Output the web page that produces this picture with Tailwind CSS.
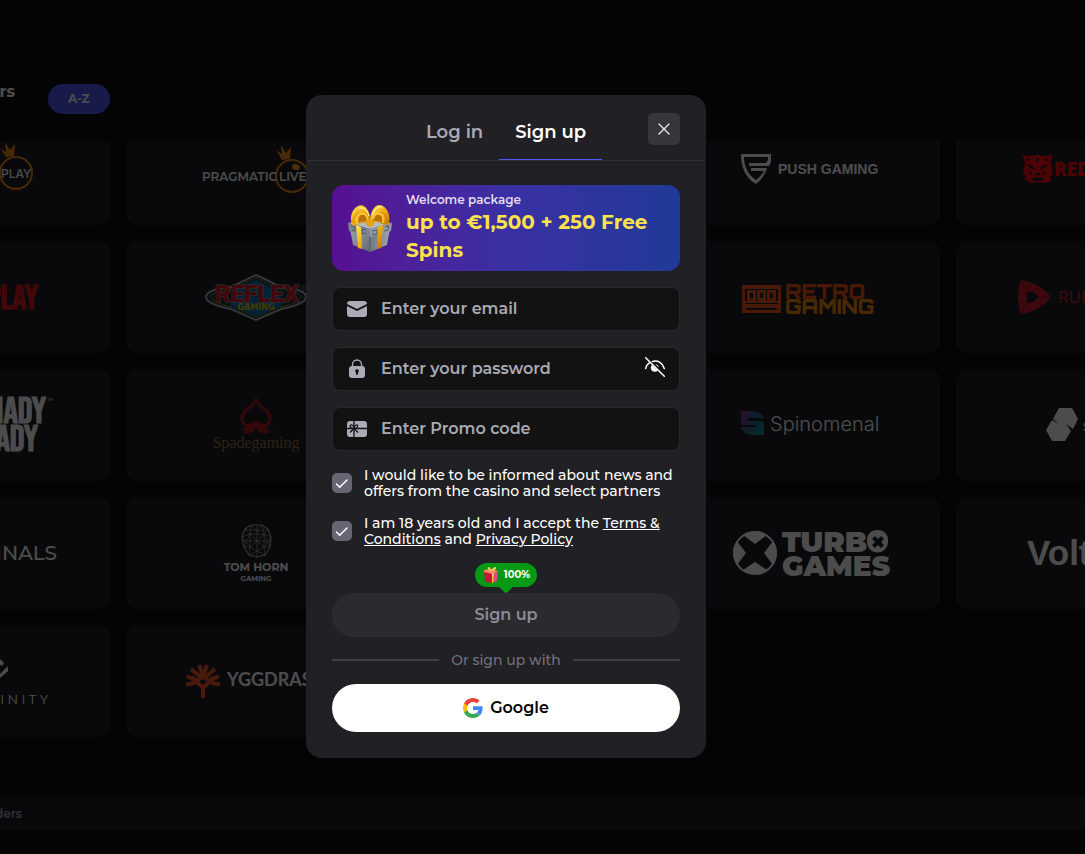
<!DOCTYPE html>
<html lang="en">
<head>
  <meta charset="UTF-8">
  <meta name="viewport" content="width=device-width, initial-scale=1">
  <title>Sign up</title>
  <script src="https://cdn.jsdelivr.net/npm/@tailwindcss/browser@4"></script>
</head>

<body class="bg-[#101011] min-h-screen overflow-hidden font-['Montserrat','Inter',sans-serif] text-white">

<!-- Providers page -->
<main class="overflow-hidden">
  <header class="flex items-start h-[141px] pt-[84px]">
    <h1 class="flex justify-end w-12 pr-[33px] text-base leading-4 font-bold">Providers</h1>
    <button class="h-[30px] px-5 rounded-full bg-[#5058f8] text-xs font-bold">A-Z</button>
  </header>

  <section class="overflow-hidden">
    <div class="grid grid-cols-5 gap-4 -mt-7 -ml-[151px] -mr-[132px]">

      <!-- row 1 -->
      <a href="#" aria-label="Pragmatic Play" class="flex justify-center h-28 rounded-xl bg-[#202127]">
        <svg width="260" height="112" viewBox="0 0 260 112">
          <path d="M157 44l-6-9 6 4-1-10 5 8 5-6-1 12z" fill="#f0861a"/>
          <circle cx="167" cy="60" r="16" fill="none" stroke="#f0861a" stroke-width="2"/>
          <text x="152" y="65" font-size="12" font-weight="500" font-family="Inter" fill="#fff">PLAY</text>
        </svg>
      </a>
      <a href="#" aria-label="Pragmatic Live" class="flex justify-center h-28 rounded-xl bg-[#202127]">
        <svg width="260" height="112" viewBox="0 0 260 112">
          <path d="M156 47l-6-10 6 4-1-9 5 8 5-6-1 12z" fill="#f0861a"/>
          <circle cx="166" cy="63" r="16" fill="none" stroke="#f0861a" stroke-width="2"/>
          <ellipse cx="170" cy="54" rx="4" ry="3" fill="#f0a01a" transform="rotate(20 170 54)"/>
          <text x="76" y="68" font-size="12" font-weight="600" fill="#fff">PRAGMATIC</text>
          <text x="153" y="68" font-size="12" font-weight="600" fill="#fff">LIVE</text>
        </svg>
      </a>
      <div class="h-28 rounded-xl bg-[#202127]"></div>
      <a href="#" aria-label="Push Gaming" class="flex justify-center h-28 rounded-xl bg-[#202127]">
        <svg width="260" height="112" viewBox="0 0 260 112" fill="#fff">
          <path fill-rule="evenodd" d="M61 41h30v8l-2 4H69v-3h17l2-3v-3H64c0 9 4 18 12 23 4-3 6-6 8-9H71v-3h16c-2 7-6 12-11 16C65 65 61 53 61 41z"/>
          <text x="98" y="61" font-size="14" font-weight="700" font-family="Liberation Sans">PUSH GAMING</text>
        </svg>
      </a>
      <a href="#" aria-label="Red Tiger" class="flex justify-center h-28 rounded-xl bg-[#202127]">
        <svg width="260" height="112" viewBox="0 0 260 112" fill="#ff0a12">
          <path fill-rule="evenodd" d="M65 42l8 1 7-1 8 1 7-1-1 7 2 13-3 2 1 4-6 2-7-1-7 1-6-3 1-4-3-2 2-11zM70 45l-1 4 4-3zM90 45l2 4-5-3zM70 51l6 2 2 4-6-3zM91 51l-6 2-2 4 6-3zM77 60h7l-3 3zM74 58l1 5-3-3zM87 58l-1 5 3-3zM75 65l5-1 1 2 1-2 5 1-2 3h-8zM79 45l1 6 2-6z"/>
          <text x="97" y="63" font-size="19" font-weight="800" font-family="Open Sans">RED TIGER</text>
        </svg>
      </a>

      <!-- row 2 -->
      <a href="#" aria-label="Play" class="flex justify-center h-28 rounded-xl bg-[#202127]">
        <svg width="260" height="112" viewBox="0 0 260 112">
          <text x="189" y="68" text-anchor="end" font-size="34" font-weight="700" font-family="Bebas Neue, Oswald, Roboto Condensed, Lato, sans-serif" fill="#e01a20">PLAY</text>
        </svg>
      </a>
      <a href="#" aria-label="Reflex Gaming" class="flex justify-center h-28 rounded-xl bg-[#202127]">
        <svg width="260" height="112" viewBox="0 0 260 112">
          <path d="M130 34l25 12c20 2 25 6 25 10s-5 8-25 12l-25 11-25-11c-20-4-25-8-25-12s5-8 25-10z" fill="#103040" stroke="#a8b8b8" stroke-width="2"/>
          <path d="M130 37l23 11c16 2 22 5 22 8s-6 7-22 10l-23 10-23-10c-16-3-22-7-22-10s6-6 22-8z" fill="none" stroke="#d0b000" stroke-dasharray="2 1"/>
          <path d="M130 39l25 12v14l-25 10-25-10V51z" fill="#0074b8"/>
          <text x="131" y="61" text-anchor="middle" font-size="24" font-weight="900" font-family="Roboto" fill="#d81c2c" stroke="#a0a8a8" stroke-width="1" paint-order="stroke">REFLEX</text>
          <text x="130" y="69" text-anchor="middle" font-size="8" font-weight="700" font-family="DejaVu Sans" fill="#e0cc00">GAMING</text>
          <text x="174" y="50" font-size="8" fill="#999">®</text>
        </svg>
      </a>
      <div class="h-28 rounded-xl bg-[#202127]"></div>
      <a href="#" aria-label="Retro Gaming" class="flex justify-center h-28 rounded-xl bg-[#202127]">
        <svg width="260" height="112" viewBox="0 0 260 112" fill="#f25415">
          <path fill-rule="evenodd" d="M62 44h39v28H62zM65 48v12h33V48zM66 67v2h31v-2zM65 62v1h33v-1z"/>
          <path fill-rule="evenodd" d="M67 49h9v11h-9zM77 49h9v11h-9zM87 49h9v11h-9zM70 52v5h3v-5zM80 52v5h3v-5zM90 52v5h3v-5z"/>
          <g font-weight="900" font-family="Orbitron, DejaVu Sans">
            <text x="105" y="58" font-size="20">RETRO</text>
            <text x="105" y="73" font-size="20" fill="#f28a00">GAMING</text>
          </g>
        </svg>
      </a>
      <a href="#" aria-label="RubyPlay" class="flex justify-center h-28 rounded-xl bg-[#202127]">
        <svg width="260" height="112" viewBox="0 0 260 112">
          <path fill-rule="evenodd" d="M64 39c12 2 22 7 30 17-7 9-17 15-30 17-4-11-4-23 0-34zM70 51v11l6-1 6-5-6-5z" fill="#d01c34"/>
          <path d="M64 39l6 12M72 41v10M83 46l-7 5M94 56H82M86 64l-10-3M70 62l-6 11M61 51l9 2M61 61l9-2" stroke="#901428"/>
          <text x="101" y="62" font-size="17" font-weight="500" font-family="Open Sans" fill="#d01c34">RUBYPLAY</text>
        </svg>
      </a>

      <!-- row 3 -->
      <a href="#" aria-label="Shady Lady" class="flex justify-center h-28 rounded-xl bg-[#202127]">
        <svg width="260" height="112" viewBox="0 0 260 112" fill="#fff">
          <g font-size="36" font-weight="700" font-family="Bebas Neue, Oswald, Roboto Condensed, Lato, sans-serif" text-anchor="end">
            <text x="197" y="54">SHADY</text>
            <text x="189" y="82">LADY</text>
          </g>
          <text x="198" y="32" font-size="4">TM</text>
        </svg>
      </a>
      <a href="#" aria-label="Spadegaming" class="flex justify-center h-28 rounded-xl bg-[#202127]">
        <svg width="260" height="112" viewBox="0 0 260 112">
          <path d="M130 31c3 7 14 10 14 19 0 7-9 9-12 3 0 5 3 6 9 7v3c-8 0-10-3-10-9h-2c0 6-2 9-10 9v-3c6-1 9-2 9-7-3 6-12 4-12-3 0-9 11-12 14-19z" fill="none" stroke="#b01c24" stroke-width="3"/>
          <text x="144" y="65" font-size="4" fill="#b01c24">TM</text>
          <text x="130" y="79" text-anchor="middle" font-size="16" font-family="Liberation Serif" fill="#907048">Spadegaming</text>
        </svg>
      </a>
      <div class="h-28 rounded-xl bg-[#202127]"></div>
      <a href="#" aria-label="Spinomenal" class="flex justify-center h-28 rounded-xl bg-[#202127]">
        <svg width="260" height="112" viewBox="0 0 260 112">
          <defs>
            <linearGradient id="spino" x1="0" x2="1" y2=".5">
              <stop stop-color="#9c2c90"/><stop offset=".5" stop-color="#3c5c98"/><stop offset="1" stop-color="#0e8c98"/>
            </linearGradient>
          </defs>
          <path d="M61 42h11c7 0 11 4 12 7l-1 1-1-1H69c-2 0-2 3 0 3h11c4 0 4 2 4 5v9H73c-7 0-11-4-12-8h14c2 0 2-2 0-2H64c-3 0-3-2-3-5z" fill="url(#spino)"/>
          <text x="90" y="62" font-size="20" font-weight="300" font-family="Inter" fill="#fff">Spinomenal</text>
        </svg>
      </a>
      <a href="#" aria-label="Stakelogic" class="flex justify-center h-28 rounded-xl bg-[#202127]">
        <svg width="260" height="112" viewBox="0 0 260 112" fill="#fff">
          <path d="M102 39h13l6 11-5 10-7-5 5 7-6 10H95l-6-11 6-10 7 4-6-5z"/>
          <text x="126" y="62" font-size="17" font-weight="500">stakelogic</text>
        </svg>
      </a>

      <!-- row 4 -->
      <a href="#" aria-label="Originals" class="flex justify-center h-28 rounded-xl bg-[#202127]">
        <svg width="260" height="112" viewBox="0 0 260 112" fill="#fff">
          <text x="208" y="63" text-anchor="end" font-size="20" font-weight="500">ORIGINALS</text>
        </svg>
      </a>
      <a href="#" aria-label="Tom Horn Gaming" class="flex justify-center h-28 rounded-xl bg-[#202127]">
        <svg width="260" height="112" viewBox="0 0 260 112" fill="#fff">
          <g fill="none" stroke="#aaa" stroke-width=".7">
            <path d="M125 28h11l6 4 3 8-1 10-5 8-8 2-8-2-5-8-2-10 3-8z" stroke-width="1.2"/>
            <path d="M125 28l-1 9 7 7 7-7-2-9-5 6zM116 40l8-3 14 0 7 3M118 50l6 0 7-6 7 6 6 0M124 50l-1 8M138 50l1 8M131 28v32M119 32l5 5M142 32l-4 5M124 50l7 4 7-4M124 37l-6 13M138 37l6 13M124 37v13M138 37v13M119 32l12 2 11-2M123 58l8-4 8 4M116 40l8 10M145 40l-7 10M116 44h29"/>
          </g>
          <text x="130" y="74" text-anchor="middle" font-size="11" font-weight="700">TOM HORN</text>
          <text x="130" y="84" text-anchor="middle" font-size="7" font-weight="700">GAMING</text>
        </svg>
      </a>
      <div class="h-28 rounded-xl bg-[#202127]"></div>
      <a href="#" aria-label="Turbo Games" class="flex justify-center h-28 rounded-xl bg-[#202127]">
        <svg width="260" height="112" viewBox="0 0 260 112" fill="#fff">
          <circle cx="75" cy="56" r="21" fill="none" stroke="#fff" stroke-width="2"/>
          <path d="M63 38c7-5 17-5 24 0L75 47zM63 73c7 5 17 5 24 0L75 65zM57 44c-5 7-5 17 0 24l9-12zM93 44c5 7 5 17 0 24l-9-12z"/>
          <text x="102" y="55" font-size="29" font-weight="900">TURB</text>
          <path fill-rule="evenodd" d="M198 33a10 10 0 0 1 10 11v1a10 10 0 0 1-21 0v-1a10 10 0 0 1 11-11zM195 39l-3 3 3 3-3 3 3 3 3-3 3 3 3-3-3-3 3-3-3-3-3 3z"/>
          <text x="102" y="79" font-size="28" font-weight="900">GAMES</text>
        </svg>
      </a>
      <a href="#" aria-label="Voltent" class="flex justify-center h-28 rounded-xl bg-[#202127]">
        <svg width="260" height="112" viewBox="0 0 260 112" fill="#fff">
          <text x="70" y="68" font-size="35" font-weight="700" font-family="Liberation Sans">Voltent</text>
        </svg>
      </a>

      <!-- row 5 -->
      <a href="#" aria-label="Infinity" class="flex justify-center h-28 rounded-xl bg-[#202127]">
        <svg width="260" height="112" viewBox="0 0 260 112" fill="#fff">
          <path d="M151 34l4 4-2 3-5-4zM144 46l5 5 10-10v5l-9 8-7-4z"/>
          <text x="199" y="79" text-anchor="end" font-size="13" font-weight="400">I N F I N I T Y</text>
        </svg>
      </a>
      <a href="#" aria-label="Yggdrasil" class="flex justify-center h-28 rounded-xl bg-[#202127]">
        <svg width="260" height="112" viewBox="0 0 260 112">
          <path d="M77 73V63L66 52M77 63l11-11M77 54L65 44M77 54l12-10M77 51l-4-11M77 51l4-11M60 59c9 1 12-4 15-7M94 59c-9 1-12-4-15-7M61 51l8 4M93 51l-8 4" fill="none" stroke="#f05428" stroke-width="4"/>
          <text x="101" y="61" font-size="18" font-weight="700" font-family="Lato" fill="#fff">YGGDRASIL</text>
        </svg>
      </a>
      <div class="h-28 rounded-xl bg-[#202127]"></div>
    </div>
  </section>

  <footer class="mt-[60px] h-[33px] bg-[#1e1f28] flex items-center">
    <span class="flex justify-end w-[22px] text-xs font-semibold text-[#a5a6b2]">Providers</span>
  </footer>
</main>

<!-- Sign up dialog -->
<div class="fixed inset-0 flex items-center justify-center pr-[73px] pb-[2px] bg-black/70">
  <div role="dialog" aria-modal="true" aria-label="Sign up" class="w-full max-w-[400px] p-[2px] pt-0 rounded-2xl bg-[#212024]">

    <div class="grid grid-cols-[1fr_auto_1fr] h-[66px] px-6 border-b border-[#303034]">
      <div class="col-start-2 flex text-lg font-semibold">
        <button class="px-4 pt-[10px] text-[#a9aab6]">Log in</button>
        <button class="px-4 pt-[10px] border-b border-[#4f5bf5]">Sign up</button>
      </div>
      <button aria-label="Close" class="justify-self-end self-center grid place-items-center size-8 mt-[3px] rounded-[5px] bg-[#36353a]">
        <svg class="size-3" viewBox="0 0 12 12" fill="none" stroke="#e4e4e8" stroke-width="1.4" stroke-linecap="round"><path d="M1 1l10 10M11 1L1 11"/></svg>
      </button>
    </div>

    <form class="px-6 pt-6 pb-6" onsubmit="return false">
      <div class="flex items-center gap-[14px] h-[86px] px-4 rounded-xl bg-linear-to-r from-[#560f92] via-[#3a2fa4] to-[#1f3a98]">
        <svg class="w-11 h-12 shrink-0" viewBox="0 0 44 48">
          <defs>
            <linearGradient id="gold" x1="0" y1="0" x2="1" y2="1"><stop stop-color="#ffe05a"/><stop offset=".5" stop-color="#f0ae12"/><stop offset="1" stop-color="#c07400"/></linearGradient>
            <linearGradient id="front" x2="1" y2="1"><stop stop-color="#9aa2aa"/><stop offset="1" stop-color="#626a73"/></linearGradient>
            <linearGradient id="side" x2="1"><stop stop-color="#727b85"/><stop offset="1" stop-color="#9aa2aa"/></linearGradient>
          </defs>
          <path d="M2 25l20 6v17L5 41z" fill="url(#front)"/>
          <path d="M22 31l20-6-3 16-17 7z" fill="url(#side)"/>
          <path d="M0 19l20-4 24 4-22 6z" fill="#b3bac1"/>
          <path d="M0 19l22 6v8L1 27z" fill="#7d8690"/>
          <path d="M22 25l22-6-1 8-21 6z" fill="#929ba4"/>
          <path d="M3 22l4 1v4l-3-1M18 26l-4-1v4l4 1M24 27l5-1v4l-4 1v-2M37 23l4-1-1 4-4 1M22 33v15" stroke="#505a65" fill="none"/>
          <path d="M8 21l5 2 1 22-4-1zM30 23l5-2-2 23-4 1z" fill="url(#gold)"/>
          <!-- bow: outer loops, inner folds, knot -->
          <path d="M21 20c-4-2-9-2-11 0l-5 2C1 15 3 6 10 2c7-3 12 5 12 14z" fill="url(#gold)"/>
          <path d="M22 19c5-2 10-1 12 1l6 1c3-7 1-15-5-19-7-4-12 4-13 13z" fill="url(#gold)"/>
          <path d="M21 18c-3-2-8-1-10 1-1-4 0-9 4-9 3 0 5 4 6 8z" fill="#b87208"/>
          <path d="M24 18c3-2 8-1 10 1 1-4 0-9-4-9-3 0-5 4-6 8z" fill="#b87208"/>
          <path d="M20 16c-1-4-3-7-7-6-3 0-5 4-4 10M25 15c1-4 3-6 7-5 3 1 4 4 3 9" fill="none" stroke="#f8c634" stroke-width="2"/>
          <path d="M11 4c5-1 9 3 10 8M34 3c-5-1-8 3-9 8" fill="none" stroke="#ffee94" stroke-width="1.5"/>
          <path d="M5 19c0-5 2-9 6-11M39 18c0-5-2-8-6-10" fill="none" stroke="#c98206"/>
          <path d="M17 17c3-2 7-2 10 0l-2 5c-2 1-4 1-6 0z" fill="#e8a010"/>
        </svg>
        <div>
          <p class="text-xs leading-4 font-semibold text-[#e0dced]">Welcome package</p>
          <p class="text-xl leading-7 font-bold text-[#fbe14b]">up to €1,500 + 250 Free Spins</p>
        </div>
      </div>

      <div class="flex items-center gap-[14px] h-11 mt-4 px-[14px] rounded-lg border border-[#29292c] bg-[#121212]">
        <svg class="size-5 shrink-0" viewBox="0 0 20 20" fill="#abacb8"><path d="M3 2h14c2 0 3 1 3 3l-10 5L0 5c0-2 1-3 3-3z"/><path d="M0 7l10 5 10-5v8c0 2-1 3-3 3H3c-2 0-3-1-3-3z"/></svg>
        <label for="email" class="sr-only">Email</label>
        <input id="email" type="email" placeholder="Enter your email" class="flex-1 min-w-0 bg-transparent outline-none text-base font-semibold placeholder:text-[#a9aab4]">
      </div>

      <div class="flex items-center gap-[14px] h-11 mt-4 px-[14px] rounded-lg border border-[#29292c] bg-[#121212]">
        <svg class="size-5 shrink-0" viewBox="0 0 20 20"><path d="M5.500 9V5.500a4.500 4.500 0 0 1 9 0V9" fill="none" stroke="#abacb8" stroke-width="1.300"/><path fill-rule="evenodd" fill="#abacb8" d="M5 7h10c2 0 3 1 3 3v6c0 2-1 3-3 3H5c-2 0-3-1-3-3v-6c0-2 1-3 3-3zm5 3a2 2 0 0 0-1.300 3.300L9.400 16h1.200l.7-2.700A2 2 0 0 0 10 10z"/></svg>
        <label for="password" class="sr-only">Password</label>
        <input id="password" type="password" placeholder="Enter your password" class="flex-1 min-w-0 bg-transparent outline-none text-base font-semibold placeholder:text-[#a9aab4]">
        <button type="button" aria-label="Show password" class="shrink-0 pb-1">
          <svg class="size-5" viewBox="0 0 20 20" fill="none" stroke="#fff" stroke-width="1.500" stroke-linecap="round"><path d="M.7.7l18.600 18.600M.7 11.500C1.200 9 2.500 7 4.500 5.600M7.500 4.400C12.800 3 18 6 19.300 11.500"/><path d="M7 8a4 4 0 1 0 5.800 5.500z" fill="#fff" stroke="none"/><path d="M10.500 7.200c1.800.2 3.200 1.600 3.400 3.400z" fill="#fff" stroke="none"/></svg>
        </button>
      </div>

      <div class="flex items-center gap-[14px] h-11 mt-4 px-[14px] rounded-lg border border-[#29292c] bg-[#121212]">
        <svg class="size-5 shrink-0" viewBox="0 0 20 20"><rect y="2" width="20" height="16" rx="3" fill="#abacb8"/><path d="M7 2v16M0 9.500h20" stroke="#121212" stroke-width="1.300"/><path d="M7 9.500C2 10 2.500 5 5 6c1.500.5 2 2 2 3.500zM7 9.500c4.500.5 4.500-4.500 2-3.500-1.500.5-2 2-2 3.500zM7 9.500l-4 4M7 9.500l4 4" fill="none" stroke="#121212" stroke-width="1.300"/></svg>
        <label for="promo" class="sr-only">Promo code</label>
        <input id="promo" type="text" placeholder="Enter Promo code" class="flex-1 min-w-0 bg-transparent outline-none text-base font-semibold placeholder:text-[#a9aab4]">
      </div>

      <div class="flex items-center gap-3 mt-4">
        <div class="grid size-5 shrink-0">
          <input id="news" type="checkbox" checked class="peer col-start-1 row-start-1 appearance-none size-5 rounded-[5px] bg-[#676674]">
          <svg class="col-start-1 row-start-1 size-5 pointer-events-none invisible peer-checked:visible" viewBox="0 0 20 20" fill="none" stroke="#fff" stroke-width="1.500" stroke-linecap="round" stroke-linejoin="round"><path d="M4.500 11l3.200 3.200L15 7"/></svg>
        </div>
        <label for="news" class="text-sm leading-4 font-medium">I would like to be informed about news and offers from the casino and select partners</label>
      </div>

      <div class="flex items-center gap-3 mt-4">
        <div class="grid size-5 shrink-0">
          <input id="terms" type="checkbox" checked class="peer col-start-1 row-start-1 appearance-none size-5 rounded-[5px] bg-[#676674]">
          <svg class="col-start-1 row-start-1 size-5 pointer-events-none invisible peer-checked:visible" viewBox="0 0 20 20" fill="none" stroke="#fff" stroke-width="1.500" stroke-linecap="round" stroke-linejoin="round"><path d="M4.500 11l3.200 3.200L15 7"/></svg>
        </div>
        <label for="terms" class="text-sm leading-4 font-medium">I am 18 years old and I accept the <a href="#" class="underline">Terms &amp; Conditions</a> and <a href="#" class="underline">Privacy Policy</a></label>
      </div>

      <div class="flex flex-col items-center mt-4">
        <div class="flex items-center gap-[5px] h-6 pl-2 pr-[7px] rounded-full bg-[#069915]">
          <svg class="size-4" viewBox="0 0 16 16"><path d="M1 4l7-1 7 1-1 10-5 2-7-1z" fill="#c2183c"/><path d="M10 6l5-2-1 10-5 2z" fill="#e04888"/><path d="M1 3l6-1 8 2-5 3-9-2z" fill="#f58a62"/><path d="M9 6l2 0-1 10-1 0z" fill="#f5c542"/><path d="M8 4C5 3 4 1 5 0c2 0 3 2 3 4 1-3 3-4 5-4 1 2-2 4-5 4z" fill="#f8d060"/></svg>
          <span class="text-[10px] font-bold">100%</span>
        </div>
        <svg class="w-[14px] h-[6px]" viewBox="0 0 14 6" fill="#069915"><path d="M0 0h14L8.500 5.200Q7 6.500 5.500 5.200z"/></svg>
      </div>
      <button class="w-full h-11 rounded-full bg-[#2b2a2e] text-base font-semibold text-[#8c8c97]">Sign up</button>

      <div class="flex items-center gap-3 h-[47px]">
        <span class="flex-1 h-[2px] bg-[#3e3d49]"></span>
        <span class="text-sm leading-4 font-medium text-[#72717e]">Or sign up with</span>
        <span class="flex-1 h-[2px] bg-[#3e3d49]"></span>
      </div>

      <button type="button" class="flex items-center justify-center gap-[7px] w-full h-12 rounded-full bg-white text-base font-semibold text-black">
        <svg class="size-5" viewBox="0 0 48 48"><path fill="#EA4335" d="M24 9.500c3.540 0 6.710 1.220 9.210 3.600l6.850-6.850C35.900 2.380 30.470 0 24 0 14.620 0 6.510 5.380 2.560 13.220l7.980 6.190C12.430 13.720 17.740 9.500 24 9.500z"/><path fill="#4285F4" d="M46.980 24.550c0-1.570-.15-3.090-.38-4.550H24v9.020h12.940c-.58 2.960-2.260 5.480-4.780 7.180l7.730 6c4.510-4.180 7.090-10.360 7.090-17.650z"/><path fill="#FBBC05" d="M10.530 28.590c-.48-1.450-.76-2.990-.76-4.590s.27-3.140.76-4.590l-7.980-6.190C.92 16.460 0 20.120 0 24c0 3.880.92 7.540 2.560 10.780l7.970-6.190z"/><path fill="#34A853" d="M24 48c6.480 0 11.930-2.130 15.890-5.810l-7.730-6c-2.150 1.450-4.920 2.300-8.160 2.300-6.260 0-11.570-4.220-13.470-9.910l-7.980 6.190C6.510 42.620 14.620 48 24 48z"/></svg>
        Google
      </button>
    </form>
  </div>
</div>

</body>
</html>
